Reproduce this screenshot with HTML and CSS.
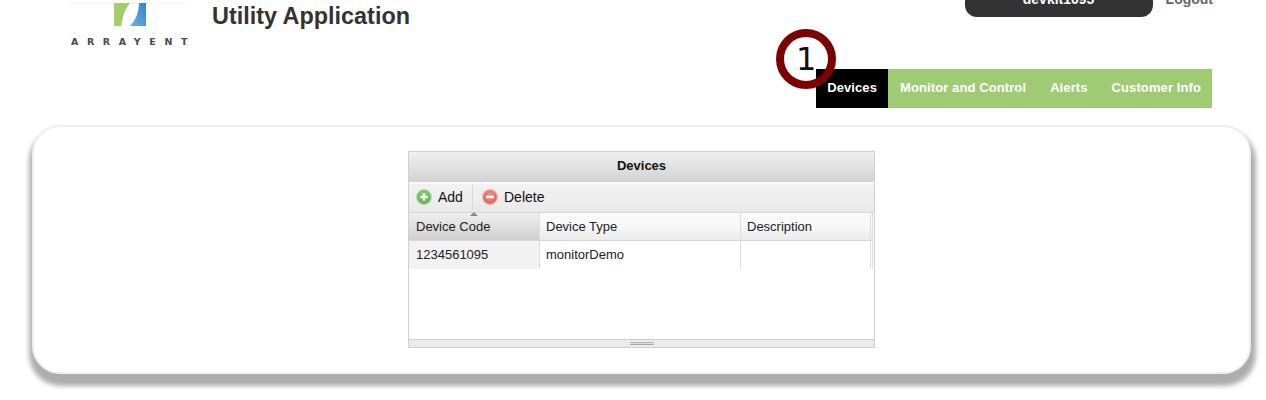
FILE: index.html
```html
<!DOCTYPE html>
<html lang="en">
<head>
<meta charset="utf-8">
<title>Utility Application</title>
<link rel="stylesheet" href="styles.css">
</head>
<body>
<div class="app">
  <header class="topbar">
    <div class="logo">
      <svg class="logo-mark" width="118" height="23" viewBox="0 0 118 23" aria-hidden="true">
        <defs>
          <linearGradient id="lg-blue" x1="0" y1="1" x2="1" y2="0">
            <stop offset="0" stop-color="#6fb0df"/>
            <stop offset="1" stop-color="#2f86c8"/>
          </linearGradient>
        </defs>
        <rect x="0" y="0" width="118" height="1" fill="#f6f6f6"/>
        <path d="M44 0H60C55 6 52 15 51.500 23H44Z" fill="#a3ce6e"/>
        <path d="M69 0H76V23H60C66 17 69 8 69 0Z" fill="url(#lg-blue)"/>
      </svg>
      <div class="logo-word">ARRAYENT</div>
    </div>
    <h1 class="app-title">Utility Application</h1>
    <div class="user-pill">devkit1095</div>
    <a class="logout">Logout</a>
  </header>

  <nav class="nav-row">
    <div class="nav">
      <span class="step-badge">1</span>
      <a class="nav-item nav-item-active">Devices</a>
      <a class="nav-item">Monitor and Control</a>
      <a class="nav-item">Alerts</a>
      <a class="nav-item">Customer Info</a>
    </div>
  </nav>

  <main class="card">
    <section class="window">
      <div class="window-title">Devices</div>
      <div class="toolbar">
        <button class="tool tool-add">
          <svg width="16" height="16" viewBox="0 0 16 16" aria-hidden="true">
            <defs>
              <radialGradient id="ic-green" cx="0.5" cy="0.4" r="0.6">
                <stop offset="0" stop-color="#a4d88e"/>
                <stop offset="1" stop-color="#58a948"/>
              </radialGradient>
            </defs>
            <circle cx="8" cy="8" r="7.400" fill="url(#ic-green)" stroke="#b5d8ab" stroke-width="1.200"/>
            <path d="M8 4.500V11.500M4.500 8H11.500" stroke="#fff" stroke-width="2.200"/>
          </svg>
          <span>Add</span>
        </button>
        <button class="tool tool-delete">
          <svg width="16" height="16" viewBox="0 0 16 16" aria-hidden="true">
            <defs>
              <radialGradient id="ic-red" cx="0.5" cy="0.4" r="0.6">
                <stop offset="0" stop-color="#f59a90"/>
                <stop offset="1" stop-color="#e2574c"/>
              </radialGradient>
            </defs>
            <circle cx="8" cy="8" r="7.400" fill="url(#ic-red)" stroke="#f0b5ae" stroke-width="1.200"/>
            <path d="M4 8H12" stroke="#fff" stroke-width="2.400"/>
          </svg>
          <span>Delete</span>
        </button>
      </div>
      <div class="grid">
        <div class="cell cell-first head head-sorted"><i class="sort-arrow"></i>Device Code</div>
        <div class="cell head">Device Type</div>
        <div class="cell head">Description</div>
        <div class="cell cell-end head"></div>
        <div class="cell cell-first data data-sorted">1234561095</div>
        <div class="cell data">monitorDemo</div>
        <div class="cell data"></div>
        <div class="cell cell-end data"></div>
      </div>
      <div class="window-footer"><i class="grip"></i></div>
    </section>
  </main>
</div>
</body>
</html>
```
FILE: styles.css
```css
* { box-sizing: border-box; }

html, body {
  margin: 0;
  height: 400px;
  overflow: hidden;
  background: #fff;
}

body {
  font-family: "Liberation Sans", Arial, sans-serif;
  color: #222;
}

.app { margin-top: -20px; }

.topbar {
  display: flex;
  align-items: flex-start;
  height: 89px;
  padding: 0 53px 0 70px;
}

.logo {
  width: 118px;
  margin-top: 23px;
}

.logo-mark { display: block; }

.logo-word {
  margin-top: 10px;
  padding-left: 1px;
  font-family: "DejaVu Sans", sans-serif;
  font-size: 9.500px;
  font-weight: bold;
  line-height: 11px;
  letter-spacing: 8.600px;
  color: #4a4a4a;
  white-space: nowrap;
}

.app-title {
  margin: 22px 0 0 24px;
  font-size: 23.400px;
  line-height: 28px;
  font-weight: bold;
  color: #333;
}

.user-pill {
  width: 188px;
  height: 37px;
  margin-left: auto;
  padding-top: 12px;
  font-size: 14px;
  line-height: 15px;
  font-weight: bold;
  text-align: center;
  color: #fff;
  background: #333;
  border-radius: 0 0 12px 12px;
}

.logout {
  margin-left: 13px;
  padding-top: 12px;
  font-size: 14px;
  line-height: 15px;
  font-weight: bold;
  color: #666;
}

.nav-row {
  display: flex;
  justify-content: flex-end;
  padding-right: 54px;
}

.nav {
  position: relative;
  display: flex;
  height: 39px;
  background: #a0cb75;
}

.nav-item {
  padding: 0 12px;
  font-size: 13px;
  line-height: 38px;
  font-weight: bold;
  letter-spacing: 0.100px;
  color: #fff;
  white-space: nowrap;
}

.nav-item:last-child { padding-right: 11px; }

.nav-item-active {
  padding: 0 11px;
  background: #000;
}

.step-badge {
  position: absolute;
  left: -40px;
  top: -40px;
  width: 60px;
  height: 60px;
  border: 8px solid #7b0000;
  border-radius: 50%;
  font-family: "DejaVu Sans", sans-serif;
  font-size: 32px;
  line-height: 44px;
  text-align: center;
  color: #111;
}

.card {
  width: 1219px;
  height: 249px;
  margin: 17px 0 0 32px;
  padding-top: 24px;
  background: #fff;
  border: 2px solid #f1eeee;
  border-radius: 28px;
  box-shadow: 1px 8px 5px 4px #adadad;
}

.window {
  width: 467px;
  height: 197px;
  margin: 0 auto;
  display: flex;
  flex-direction: column;
  background: #fff;
  border: 1px solid #d0d0d0;
}

.window-title {
  height: 30px;
  font-size: 13px;
  line-height: 28px;
  font-weight: bold;
  text-align: center;
  color: #111;
  background: linear-gradient(#efefef, #d2d2d2);
}

.toolbar {
  display: flex;
  height: 31px;
  border-top: 2px solid #fafafa;
  border-bottom: 1px solid #d6d6d6;
  background: linear-gradient(#f2f2f2, #e9e9e9);
}

.tool {
  display: flex;
  align-items: center;
  gap: 6px;
  height: 26px;
  padding: 0 9px 0 7px;
  border: 0;
  font: 14px "Liberation Sans", Arial, sans-serif;
  color: #111;
  background: none;
}

.tool-add {
  width: 64px;
  border-right: 1px solid #d8d8d8;
}

.tool-delete { padding-left: 9px; }

.grid {
  display: grid;
  grid-template-columns: 131px 201px 130px 2px;
  grid-template-rows: 28px 28px;
}

.cell {
  padding-left: 6px;
  font-size: 13px;
  white-space: nowrap;
  color: #222;
  border-right: 1px solid #dedede;
}

.cell-first { padding-left: 7px; }

.cell-end {
  padding: 0;
  background: none;
  border-bottom: 0;
}

.head {
  position: relative;
  line-height: 27px;
  background: linear-gradient(#f9f9f9 40%, #ebebeb);
  border-bottom: 1px solid #d8d8d8;
}

.head-sorted { background: linear-gradient(#efefef, #cfcfcf); }

.data {
  line-height: 27px;
  background: #fff;
}

.data-sorted { background: #f2f2f2; }

.sort-arrow {
  position: absolute;
  left: 61px;
  top: -1px;
  width: 0;
  height: 0;
  border-left: 4px solid transparent;
  border-right: 4px solid transparent;
  border-bottom: 4px solid #8a8a8a;
}

.window-footer {
  display: flex;
  justify-content: center;
  align-items: center;
  height: 8px;
  margin-top: auto;
  border-top: 1px solid #cfcfcf;
  background: #ebebeb;
}

.grip {
  width: 24px;
  height: 3px;
  border-top: 1px solid #bbb;
  border-bottom: 1px solid #aaa;
  background: #ddd;
}
```
